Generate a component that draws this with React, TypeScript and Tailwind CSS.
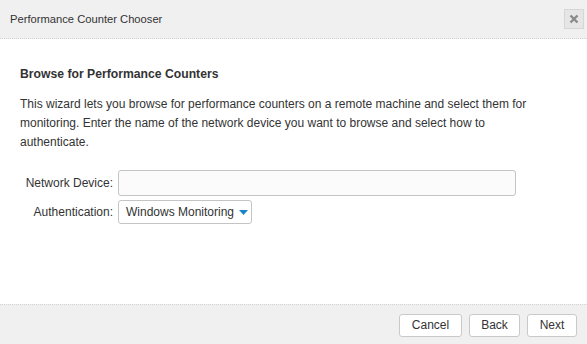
import React from "react";

export default function App() {
  return (
    <div
      className="w-[587px] h-[344px] bg-white flex flex-col text-[12px] text-[#333]"
      style={{ fontFamily: '"Liberation Sans", Arial, sans-serif' }}
    >
      <div className="h-[39px] shrink-0 bg-[#f0f0f0] border-b border-dotted border-[#d4d4d4] flex items-center justify-between pl-[10px] pr-[3px]">
        <span className="text-[11.2px] text-[#333]">Performance Counter Chooser</span>
        <button className="w-[20px] h-[20px] bg-[#e6e6e6] border border-[#d6d6d6] flex items-center justify-center">
          <svg width="10" height="10" viewBox="0 0 10 10">
            <path d="M1.5 1.5 L8.5 8.5 M8.5 1.5 L1.5 8.5" stroke="#8a8a8a" strokeWidth="2.4" strokeLinecap="butt" />
          </svg>
        </button>
      </div>
      <div className="flex-1 px-[20px] pt-[27px]">
        <div className="font-bold text-[12.2px] leading-[16px] text-[#333]">Browse for Performance Counters</div>
        <p className="mt-[13px] leading-[19px] text-[#333] pr-[20px]">
          This wizard lets you browse for performance counters on a remote machine and select them for monitoring. Enter the name of the network device you want to browse and select how to authenticate.
        </p>
        <div className="mt-[18px] grid grid-cols-[93px_1fr] gap-x-[5px] gap-y-[4px] items-center">
          <label className="text-right">Network Device:</label>
          <input className="w-[398px] h-[26px] border border-[#c4c4c4] rounded-[3px] bg-[#fbfbfb] outline-none px-2" />
          <label className="text-right">Authentication:</label>
          <div className="w-[134px] h-[24px] border border-[#c4c4c4] rounded-[3px] bg-white flex items-center pl-[7px] gap-[5px]">
            <span>Windows Monitoring</span>
            <svg width="9" height="5" viewBox="0 0 9 5">
              <path d="M0 0 L9 0 L4.5 5 Z" fill="#1a85c8" />
            </svg>
          </div>
        </div>
      </div>
      <div className="h-[40px] shrink-0 bg-[#f0f0f0] border-t border-dotted border-[#d4d4d4] flex items-center justify-end gap-[7px] pr-[10px] pt-[1px]">
        <button className="w-[63px] h-[23px] bg-white border border-[#c9c9c9] rounded-[3px] text-[#333]">Cancel</button>
        <button className="w-[51px] h-[23px] bg-white border border-[#c9c9c9] rounded-[3px] text-[#333]">Back</button>
        <button className="w-[50px] h-[23px] bg-white border border-[#c9c9c9] rounded-[3px] text-[#333]">Next</button>
      </div>
    </div>
  );
}
